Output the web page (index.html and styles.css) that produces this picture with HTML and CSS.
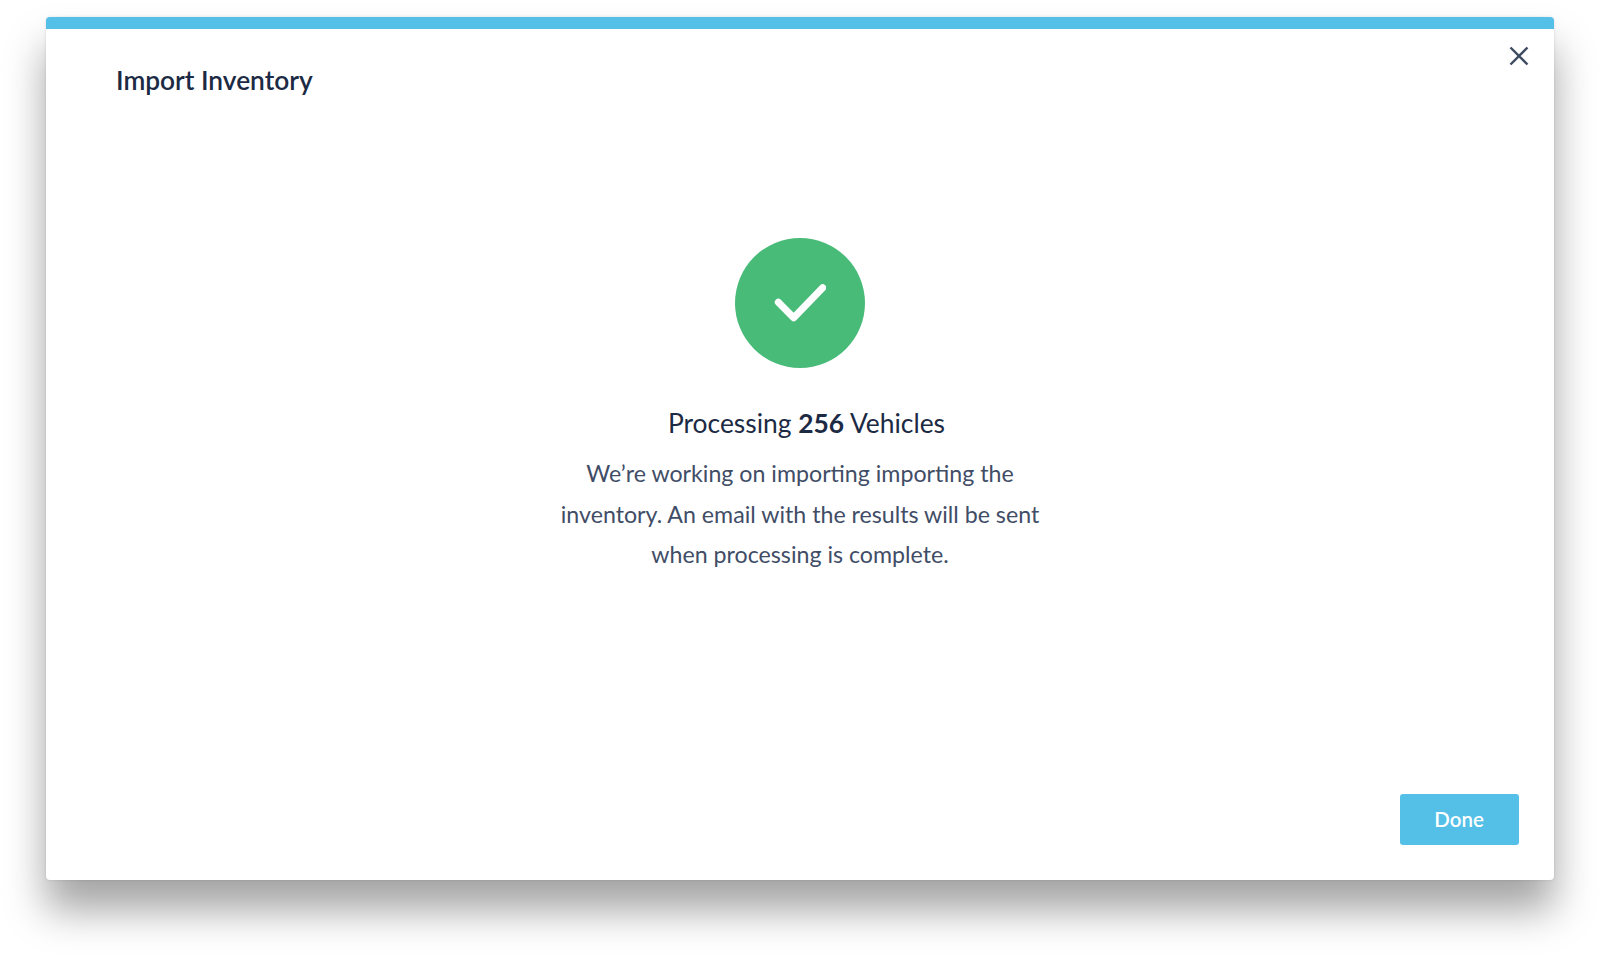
FILE: index.html
```html
<!DOCTYPE html>
<html lang="en">
<head>
<meta charset="utf-8">
<title>Import Inventory</title>
<link rel="stylesheet" href="styles.css">
</head>
<body>
<main class="modal">
  <header class="modal-header">
    <h1 class="modal-title">Import Inventory</h1>
    <button class="close" aria-label="Close">
      <svg width="20" height="20" viewBox="0 0 20 20" fill="none" stroke="#3e4a62" stroke-width="2.4"><path d="M1.5 1.5 18.5 18.5M18.5 1.5 1.5 18.5"/></svg>
    </button>
  </header>
  <section class="modal-body">
    <div class="success">
      <svg width="52" height="38" viewBox="0 0 52 38" fill="none" stroke="#fff" stroke-width="7" stroke-linecap="round" stroke-linejoin="round"><path d="M4.3 18.2 19.7 33.8 48.7 3.8"/></svg>
    </div>
    <h2 class="status">Processing <strong>256</strong> Vehicles</h2>
    <p class="message">We’re working on importing importing the inventory. An email with the results will be sent when processing is complete.</p>
  </section>
  <footer class="modal-footer">
    <button class="done">Done</button>
  </footer>
</main>
</body>
</html>
```
FILE: styles.css
```css
* { box-sizing: border-box; }
html, body { margin: 0; height: 100%; }
body {
  background: #fff;
  padding: 17px 46px 75px;
  font-family: Lato, "Liberation Sans", sans-serif;
  overflow: hidden;
}
.modal {
  height: 863px;
  background: #fff;
  border-top: 12px solid #54c0e8;
  border-radius: 4px;
  box-shadow: 0 30px 40px rgba(0,0,0,.36), 0 0 3px rgba(0,0,0,.12);
  display: flex;
  flex-direction: column;
}
.modal-header {
  display: flex;
  justify-content: space-between;
  align-items: flex-start;
  padding: 17px 25px 0 70px;
}
.modal-title {
  margin: 18px 0 0;
  font-size: 26.3px;
  line-height: 32px;
  font-weight: 600;
  color: #1c2a44;
}
.close {
  padding: 0;
  border: 0;
  background: none;
  width: 20px;
  height: 20px;
  display: block;
}
.close svg { display: block; }
.modal-body {
  flex: 1;
  display: flex;
  flex-direction: column;
  align-items: center;
  padding-top: 142px;
}
.success {
  width: 130px;
  height: 130px;
  border-radius: 50%;
  background: #48bb78;
  display: flex;
  align-items: center;
  justify-content: center;
}
.status {
  margin: 39px 0 0;
  padding-left: 13px;
  font-size: 26.4px;
  line-height: 32px;
  font-weight: 400;
  color: #1c2a44;
}
.status strong { font-weight: 700; }
.message {
  margin: 14px 0 0;
  width: 520px;
  padding: 0 12px;
  text-align: center;
  font-size: 23.2px;
  line-height: 40.7px;
  font-weight: 400;
  font-variant-ligatures: common-ligatures discretionary-ligatures;
  color: #414d66;
}
.modal-footer {
  display: flex;
  justify-content: flex-end;
  padding: 0 35px 35px;
}
.done {
  width: 119px;
  height: 51px;
  padding: 0 1px 2px 0;
  border: 0;
  border-radius: 3px;
  background: #54c0e8;
  color: #fff;
  font: 600 20.5px Lato, "Liberation Sans", sans-serif;
}
```
